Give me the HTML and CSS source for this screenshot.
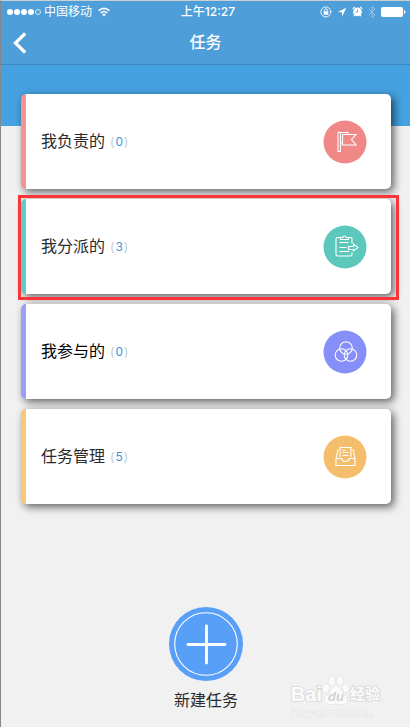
FILE: index.html
```html
<!DOCTYPE html>
<html lang="zh-CN">
<head>
<meta charset="utf-8">
<meta name="viewport" content="width=device-width, initial-scale=1">
<title>任务</title>
<link rel="stylesheet" href="styles.css">
</head>
<body>
<div class="app">
  <header class="top">
    <div class="status">
      <div class="status-side">
        <svg class="signal" viewBox="0 0 34 8"><g fill="#fff"><circle cx="3" cy="4" r="3"/><circle cx="10" cy="4" r="3"/><circle cx="17" cy="4" r="3"/><circle cx="24" cy="4" r="3"/></g><circle cx="31" cy="4" r="2.5" fill="none" stroke="#fff" stroke-width=".7"/></svg>
        <span>中国移动</span>
        <svg class="wifi" viewBox="0 0 12 10"><g fill="none" stroke="#fff" stroke-width="1.6"><path d="M.6 3.7Q6-1.1 11.4 3.7M2.6 6Q6 3 9.4 6"/></g><path d="M3.9 7.3Q6 5.5 8.1 7.3L6 9.6Z" fill="#fff"/></svg>
      </div>
      <span class="time">上午12:27</span>
      <div class="status-side status-end">
        <svg class="lock" viewBox="0 0 12 12"><g fill="none" stroke="#fff" stroke-width=".9"><path d="M10.6 7.5A5 5 0 1 1 10.7 4.7M4.6 5.5V4.2a1.4 1.4 0 0 1 2.8 0V5.500"/></g><path d="M3.7 5.2h4.6v3.6H3.7zM9.2 5.2h2.8l-1.4 2z" fill="#fff"/></svg>
        <svg class="arrow" viewBox="0 0 10 10"><path d="M9.3.8.8 5l4.1.3.2 4.1z" fill="#fff"/></svg>
        <svg class="alarm" viewBox="0 0 11 11"><circle cx="5.5" cy="5.9" r="4.4" fill="#fff"/><path d="M.7 2.900 2.900.9M10.3 2.900 8.100.9M2.6 9.1 1.9 10.300M8.4 9.1l.7 1.2" stroke="#fff" stroke-width="1.2"/><path d="M5.6 3.5v2.6H3.600" fill="none" stroke="#4e9eda" stroke-width=".9"/></svg>
        <svg class="bluetooth" viewBox="0 0 8 12"><path d="m.8 3 6.2 6-3 2.5V.5L7 3 .8 9" fill="none" stroke="#9bcaee" stroke-width=".9"/></svg>
        <svg class="battery" viewBox="0 0 25 10"><rect width="22" height="10" rx="2" fill="#fff"/><path d="M23 3q1.5.5 1.5 2T23 7z" fill="#fff"/></svg>
      </div>
    </div>
    <nav class="nav">
      <button class="back" type="button" aria-label="返回"><svg viewBox="0 0 14 22"><path d="M12.2 1.5 2.4 11l9.8 9.5" fill="none" stroke="#fff" stroke-width="3.2"/></svg></button>
      <h1>任务</h1>
    </nav>
  </header>
  <main>
    <div class="cards">
      <a class="card red" href="#owned">
        <span class="label">我负责的</span><span class="count">(<b>0</b>)</span>
        <svg class="icon" viewBox="0 0 44 44"><circle cx="22" cy="22" r="21.5"/><path d="M15 12.500q1.200-1 2.400 0V31.500H15zM17.400 12.500H25v2M17.400 23H19M19.500 14.500H33L28.500 19.500 33 25H19.500z"/></svg>
      </a>
      <a class="card green selected" href="#assigned">
        <span class="label">我分派的</span><span class="count">(<b>3</b>)</span>
        <svg class="icon" viewBox="0 0 44 44"><circle cx="22" cy="22" r="21.5"/><path d="M17.500 12.500H14.500q-1.500 0-1.500 1.500v15.500q0 1.500 1.500 1.500H27.500q1.500 0 1.500-1.500V27.500M17.500 12.500v2h8v-2h-2q-.5-1.500-2-1.500t-2 1.500zM25.500 12.500h2q1.500 0 1.500 1.500v4.500M16.500 17.500H25.500M16.500 22.500H23.500M16.500 26.500H26.500M25.500 21.500h5v-2.500l4.500 3.500-4.500 3.500V24.500h-5z"/></svg>
      </a>
      <a class="card violet" href="#joined">
        <span class="label">我参与的</span><span class="count">(<b>0</b>)</span>
        <svg class="icon" viewBox="0 0 44 44"><circle cx="22" cy="22" r="21.5"/><g><circle cx="23" cy="18" r="6.300"/><circle cx="18.500" cy="25" r="6.300"/><circle cx="27.500" cy="25" r="6.300"/></g></svg>
      </a>
      <a class="card amber" href="#manage">
        <span class="label">任务管理</span><span class="count">(<b>5</b>)</span>
        <svg class="icon" viewBox="0 0 44 44"><circle cx="22" cy="22" r="21.5"/><path d="M17 22V12.500h11V22M19.500 15.500h3M19.500 17.500h6M19.500 20.500h6M15 14 13.200 23M30 14l1.800 9M13 23.500h6q0 3 3.500 3t3.500-3h6v7H13z"/></svg>
      </a>
    </div>
    <button class="create" type="button">
      <svg viewBox="0 0 74 74"><circle cx="37" cy="37" r="37" fill="#589ff7"/><circle cx="37" cy="37" r="31.3" fill="none" stroke="#fff" stroke-width="1.1"/><path d="M37.500 19v37M19 37.500h37" stroke="#fff" stroke-width="2.8" stroke-linecap="round"/></svg>
      <span>新建任务</span>
    </button>
  </main>
  <div class="watermark">
    <div class="brand">
      <span>Bai</span>
      <span class="paw"><svg viewBox="0 0 28 30"><g fill="#fbfbfb" stroke="#d9d9d9" stroke-width=".9"><ellipse cx="4" cy="13" rx="3" ry="4"/><ellipse cx="10" cy="5.500" rx="3" ry="4.500"/><ellipse cx="18" cy="5.500" rx="3" ry="4.500"/><ellipse cx="24" cy="13" rx="3" ry="4"/><path d="M14 11q3 0 5 4t5 6q3.500 7-3 8-3 .5-7-.5-4 1-7 .5-6.500-1-3-8 3-2 5-6t5-4z"/></g></svg><i>du</i></span>
      <span class="brand-cn">经验</span>
    </div>
    <div class="domain">jingyan.baidu.com</div>
  </div>
</div>
</body>
</html>
```
FILE: styles.css
```css
* {
  box-sizing: border-box;
}

body {
  margin: 0;
  background: #f1f1f1;
  color: #2b2b2b;
  font-family: "Liberation Sans", "Noto Sans CJK SC", sans-serif;
}

.app {
  position: relative;
  min-height: 100vh;
  border-top: 1px solid #ccd0d2;
  border-left: 1px solid #85878b;
}

svg {
  display: block;
}

button {
  padding: 0;
  border: 0;
  background: none;
  color: inherit;
  font: inherit;
}

.top {
  background: #4e9eda;
  border-bottom: 1px solid #3d87bf;
  color: #fff;
}

.status {
  display: grid;
  grid-template-columns: 1fr auto 1fr;
  align-items: center;
  height: 21px;
  padding: 0 4px 0 6px;
  font: 12px/20px Inter, "Noto Sans CJK SC", sans-serif;
}

.status-side {
  display: flex;
  align-items: center;
  gap: 3px;
}

.status-end {
  justify-content: flex-end;
  gap: 5px;
}

.signal {
  width: 34px;
  height: 8px;
}

.wifi {
  width: 12px;
  height: 10px;
  margin-left: 3px;
}

.time {
  padding-left: 3px;
  font-weight: 500;
}

.lock {
  width: 12px;
  height: 12px;
}

.arrow {
  width: 10px;
  height: 10px;
}

.alarm {
  width: 11px;
  height: 11px;
}

.bluetooth {
  width: 8px;
  height: 12px;
}

.battery {
  width: 25px;
  height: 10px;
}

.nav {
  display: grid;
  grid-template-columns: 1fr auto 1fr;
  align-items: center;
  height: 42px;
  padding: 0 12px;
}

.back svg {
  width: 14px;
  height: 22px;
}

h1 {
  margin: 0;
  font-size: 16px;
  font-weight: 500;
  line-height: 24px;
}

main {
  display: flex;
  flex-direction: column;
  align-items: center;
  padding: 29px 19px 12px 20px;
  background: linear-gradient(#45a1df 61px, transparent 61px);
}

.cards {
  display: grid;
  gap: 10px;
  width: 100%;
}

.card {
  position: relative;
  display: flex;
  align-items: center;
  height: 95px;
  padding: 0 24px 0 15px;
  border-left: 5px solid;
  border-radius: 5px;
  background: #fff;
  box-shadow: 3px 3px 8px rgba(0, 0, 0, 0.6);
  text-decoration: none;
}

.label {
  color: #2b2b2b;
  font-size: 16px;
  line-height: 24px;
}

.violet .label {
  color: #000;
}

.count {
  margin-left: 5px;
  color: #bccbd4;
  font: 12px/20px Inter, sans-serif;
}

.count b {
  margin: 0 1px;
  color: #4293d8;
  font-weight: 400;
}

.icon {
  width: 44px;
  height: 44px;
  margin-left: auto;
  fill: none;
  stroke: #fff;
  stroke-width: 1.1;
}

.icon > circle {
  fill: currentColor;
  stroke: none;
}

.red {
  border-color: #f39492;
  color: #f08888;
}

.green {
  border-color: #5dccc2;
  color: #5bc8bb;
}

.violet {
  border-color: #98a1f8;
  color: #868ff8;
}

.amber {
  border-color: #f6c878;
  color: #f5be6d;
}

.selected::after {
  position: absolute;
  inset: -4px -8px -6px -8px;
  border: 3px solid #fd3538;
  content: "";
}

.create {
  display: flex;
  flex-direction: column;
  align-items: center;
  gap: 8px;
  margin-top: 103px;
  font-size: 16px;
  line-height: 24px;
}

.create svg {
  width: 74px;
  height: 74px;
}

.watermark {
  position: absolute;
  right: 30px;
  bottom: 8px;
  color: #fbfbfb;
  -webkit-text-stroke: 2px #dcdcdc;
  paint-order: stroke fill;
}

.brand {
  display: flex;
  align-items: flex-end;
  font-size: 20px;
  font-weight: 700;
  line-height: 22px;
}

.paw {
  position: relative;
}

.paw svg {
  width: 28px;
  height: 30px;
}

.paw i {
  position: absolute;
  right: 0;
  bottom: 0;
  left: 0;
  color: #d2d2d2;
  font-size: 13px;
  line-height: 16px;
  text-align: center;
  -webkit-text-stroke: 0;
}

.brand-cn {
  font-size: 15px;
}

.domain {
  font: 11px/14px "Liberation Serif", serif;
  -webkit-text-stroke: 1px #e2e2e2;
}
```
